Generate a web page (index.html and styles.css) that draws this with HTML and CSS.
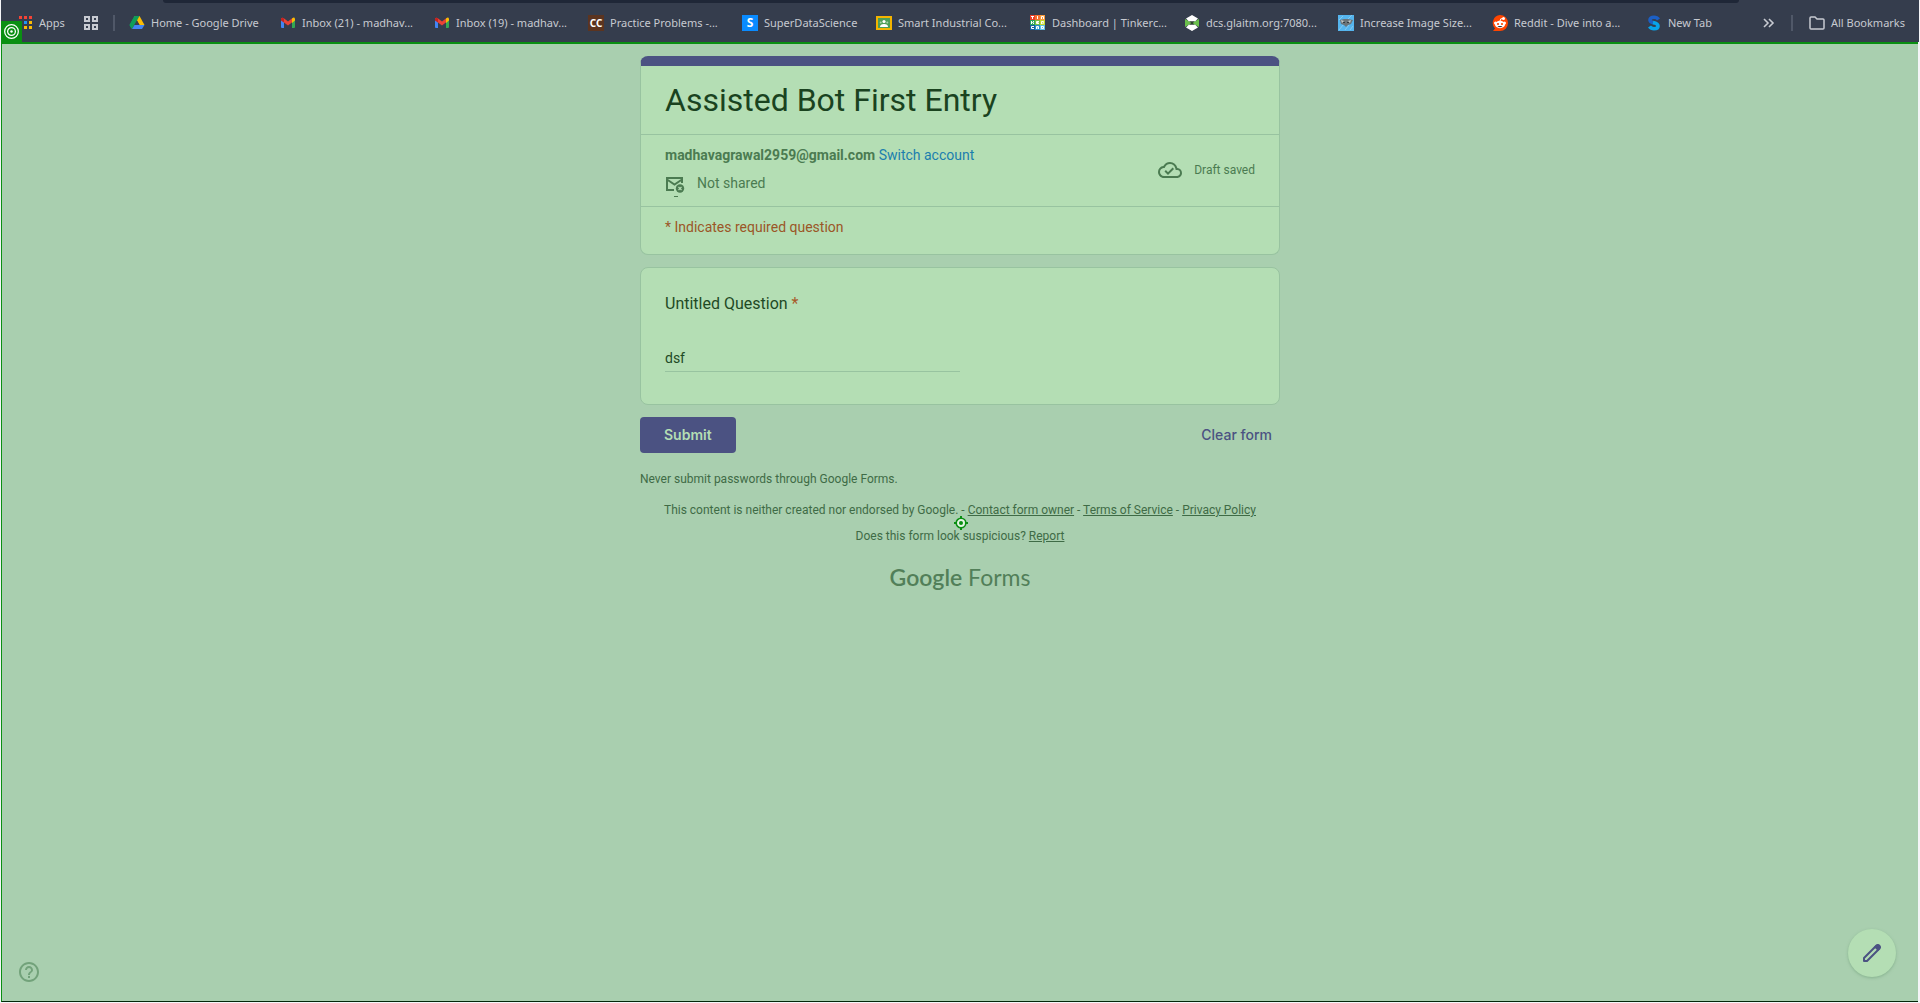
FILE: index.html
```html
<!DOCTYPE html>
<html lang="en">
<head>
<meta charset="utf-8">
<title>Assisted Bot First Entry</title>
<link rel="stylesheet" href="styles.css">
</head>
<body>
<header class="browser">
  <div class="omnibox"></div>
  <nav class="bookmarks" aria-label="Bookmarks">
    <a class="bookmark apps" href="#"><svg class="icon" viewBox="0 0 16 16"><g fill="#f44336"><path d="M2 1h3v3H2zM7 1h3v3H7zM12 1h3v3h-3z"/></g><path fill="#f44336" d="M2 6h3v3H2z"/><path fill="#2196f3" d="M7 6h3v3H7z"/><path fill="#fbbc04" d="M12 6h3v3h-3zM2 11h3v3H2zM7 11h3v3H7zM12 11h3v3h-3z"/></svg><span>Apps</span></a>
    <a class="bookmark groups" href="#" aria-label="Tab groups"><svg class="icon" viewBox="0 0 16 16" fill="none" stroke="#c7cad1" stroke-width="2"><path d="M2 2h4v4H2zM10 2h4v4h-4zM2 10h4v4H2zM10 10h4v4h-4z"/></svg></a>
    <span class="divider"></span>
    <a class="bookmark first" href="#"><svg class="icon" viewBox="0 0 16 16"><path fill="#0f9d58" d="M5.500 1h4L4 10.500 2.500 14 .5 10z"/><path fill="#fbbc04" d="M5.500 1h5l5 9h-5z"/><path fill="#0f9d58" d="M5.500 1h5L8 5.500 3 14 .5 10z"/><path fill="#4285f4" d="M5.500 10h10L13 14H3z"/><path fill="#353d4d" d="M8 5.500l2.500 4.500h-5z"/></svg><span>Home - Google Drive</span></a>
    <a class="bookmark wide" href="#"><svg class="icon" viewBox="0 0 16 16"><path fill="#4285f4" d="M1 4l3 2v7H2q-1 0-1-1z"/><path fill="#34a853" d="M12 6l3-2v8q0 1-1 1h-2z"/><path fill="#ea4335" d="M1 5V4q.5-2 2.500-1L8 6.500 12.500 3v4L8 10.500 4 7.500z"/><path fill="#fbbc04" d="M12 3.500q2.500-2 3 .5v1.500L12 8z"/><path fill="#c5221f" d="M1 4q1-2 3-.5V7.500L1 5.500z"/></svg><span>Inbox (21) - madhav...</span></a>
    <a class="bookmark wide" href="#"><svg class="icon" viewBox="0 0 16 16"><path fill="#4285f4" d="M1 4l3 2v7H2q-1 0-1-1z"/><path fill="#34a853" d="M12 6l3-2v8q0 1-1 1h-2z"/><path fill="#ea4335" d="M1 5V4q.5-2 2.500-1L8 6.500 12.500 3v4L8 10.500 4 7.500z"/><path fill="#fbbc04" d="M12 3.500q2.500-2 3 .5v1.500L12 8z"/><path fill="#c5221f" d="M1 4q1-2 3-.5V7.500L1 5.500z"/></svg><span>Inbox (19) - madhav...</span></a>
    <a class="bookmark wide" href="#"><span class="icon tile brown">CC</span><span>Practice Problems -...</span></a>
    <a class="bookmark short" href="#"><span class="icon tile blue">S</span><span>SuperDataScience</span></a>
    <a class="bookmark wide" href="#"><svg class="icon" viewBox="0 0 16 16"><path fill="#f4b400" d="M0 1h16v14H0z"/><path fill="#4c9f57" d="M2 3h12v10H2z"/><circle cx="8" cy="6.500" r="1.600" fill="#fff"/><circle cx="4.700" cy="7.500" r="1" fill="#a5d3a9"/><circle cx="11.300" cy="7.500" r="1" fill="#a5d3a9"/><path fill="#fff" d="M4 12q0-3 4-3t4 3z"/></svg><span>Smart Industrial Co...</span></a>
    <a class="bookmark wide" href="#"><svg class="icon" viewBox="0 0 16 16"><path fill="#e8402a" d="M0 0h5v5H0z"/><path fill="#f3702f" d="M5 0h5v5H5z"/><path fill="#f89a3c" d="M10 0h5v5h-5z"/><path fill="#28a55c" d="M0 5h5v5H0z"/><path fill="#77c043" d="M5 5h5v5H5z"/><path fill="#c3d82e" d="M10 5h5v5h-5z"/><path fill="#17619c" d="M0 10h5v5H0z"/><path fill="#2490c9" d="M5 10h5v5H5z"/><path fill="#5fc0e8" d="M10 10h5v5h-5z"/><path fill="none" stroke="#fff" d="M1 1.500h3M2.500 1v3M7.500 1v3M11.500 4V1.500h2V4M1.500 6v3M3.500 6v1l-1 .5 1 .5v1M9 6.500H6.500v2H9M6.500 7.500h2M11.500 9V6.500h2v1l-1 .5 1 1M4 11.500H1.500v2H4M6.500 14v-2.500h2V14M6.500 13h2M11.500 11v2.500h2v-2h-2"/></svg><span>Dashboard | Tinkerc...</span></a>
    <a class="bookmark wide" href="#"><svg class="icon" viewBox="0 0 16 16"><path fill="#6abf4b" d="M1 4l7 4-7 4zM15 4v8L8 8z"/><path fill="#fff" d="M8 0l6 3.500-3 3H5l-3-3zM8 16l-6-3.500 3-3h6l3 3z"/><path fill="#27401f" d="M5 6.500h6L8 8zM5 9.500L8 8l3 1.500z"/></svg><span>dcs.glaitm.org:7080...</span></a>
    <a class="bookmark wide" href="#"><svg class="icon" viewBox="0 0 16 16"><path fill="#55b5ee" d="M0 0h16v16H0z"/><path stroke="#87caee" d="M1 5l4-4M10 4l4-4M1 15l4-5M7 15l4-5M12 15l3-4"/><path fill="#6b7478" d="M2 5l4-1h4l5 1-2 4-3 1-2 2-2-2-3-1z"/><path fill="#c4c7c6" d="M3 5l3 1-2 2zM13 5l-3 1 2 2z"/><path fill="#333b40" d="M5 7h2v1H5zM9 7h2v1H9z"/></svg><span>Increase Image Size...</span></a>
    <a class="bookmark wide" href="#"><svg class="icon" viewBox="0 0 16 16"><path fill="#ff4500" d="M8 0a8 8 0 1 1 0 16H1l2-2.500A8 8 0 0 1 8 0z"/><circle cx="11.500" cy="3.500" r="1.500" fill="#fff"/><path fill="none" stroke="#fff" d="M8 6q0-3 3-2.500"/><circle cx="3.500" cy="8" r="1.500" fill="#fff"/><circle cx="12.500" cy="8" r="1.500" fill="#fff"/><ellipse cx="8" cy="9.500" rx="5" ry="3.700" fill="#fff"/><circle cx="6" cy="9" r="1.100" fill="#ff4500"/><circle cx="10" cy="9" r="1.100" fill="#ff4500"/><path fill="#22303a" d="M5.500 11h5Q8 13.500 5.500 11z"/></svg><span>Reddit - Dive into a...</span></a>
    <a class="bookmark" href="#"><svg class="icon" viewBox="0 0 16 16"><path fill="none" stroke="#1c5fc4" stroke-width="3.600" d="M12.500 4.500Q11 2.300 8 2.300 4 2.300 4 5q0 2 4 3"/><path fill="none" stroke="#08a4ea" stroke-width="3.600" d="M7 7.500q5 1 5 3.500 0 2.700-4 2.700-3 0-4.500-2.200"/></svg><span>New Tab</span></a>
    <span class="end">
      <button class="more" aria-label="More bookmarks"><svg viewBox="0 0 12 10" fill="none" stroke="#c7cad1" stroke-width="1.600"><path d="M1 1l4 4-4 4M6 1l4 4-4 4"/></svg></button>
      <span class="divider"></span>
      <a class="bookmark" href="#"><svg class="icon" viewBox="0 0 16 16" fill="none" stroke="#c7cad1" stroke-width="1.500"><path d="M1 3q0-1 1-1h4l2 2h6q1 0 1 1v8q0 1-1 1H2q-1 0-1-1z"/></svg><span>All Bookmarks</span></a>
    </span>
  </nav>
  <svg class="badge" viewBox="0 0 20 20" fill="none" stroke="#fff"><circle cx="10" cy="10" r="6.500" stroke-width="1.200"/><circle cx="10" cy="10" r="3.700" stroke-width="1.200"/><circle cx="10" cy="10" r="1.200" fill="#fff" stroke="none"/></svg>
</header>

<main class="page">
  <form class="form">
    <section class="card intro">
      <h1>Assisted Bot First Entry</h1>
      <div class="account">
        <div>
          <p><strong>madhavagrawal2959@gmail.com</strong> <a href="#">Switch account</a></p>
          <p class="shared"><svg viewBox="0 0 20 20"><path fill="none" stroke="#4b7b51" stroke-width="2" d="M9 17H2V5h15v5M2 6.500l7.500 5L17 6.500"/><circle cx="15" cy="15.500" r="4.200" fill="#4b7b51"/><path stroke="#b4deb4" stroke-width="1.200" d="M13.500 14l3 3M16.500 14l-3 3"/><path fill="#4b7b51" d="M9 23h4v1H9z"/></svg><span>Not shared</span></p>
        </div>
        <p class="draft"><svg viewBox="0 0 24 24" fill="#4b7b51"><path d="M19.350 10.040A7.490 7.490 0 0 0 12 4C9.110 4 6.600 5.640 5.350 8.040A5.994 5.994 0 0 0 0 14c0 3.310 2.690 6 6 6h13c2.760 0 5-2.240 5-5 0-2.640-2.050-4.780-4.650-4.960zM19 18H6c-2.210 0-4-1.790-4-4 0-2.050 1.530-3.760 3.560-3.970l1.070-.110.500-.950A5.469 5.469 0 0 1 12 6c2.620 0 4.880 1.860 5.390 4.430l.300 1.500 1.530.110A2.980 2.980 0 0 1 22 15c0 1.650-1.350 3-3 3zm-9-3.820l-2.090-2.090L6.500 13.500 10 17l6.010-6.010-1.410-1.410z"/></svg><span>Draft saved</span></p>
      </div>
      <p class="required">* Indicates required question</p>
    </section>
    <section class="card question">
      <label for="answer">Untitled Question <span class="star">*</span></label>
      <input id="answer" type="text" value="dsf" required>
    </section>
    <div class="actions">
      <button class="submit" type="submit">Submit</button>
      <button class="clear" type="reset">Clear form</button>
    </div>
  </form>
  <footer class="footer">
    <p class="warning">Never submit passwords through Google Forms.</p>
    <p class="legal">This content is neither created nor endorsed by Google. - <a href="#">Contact form owner</a> - <a href="#">Terms of Service</a> - <a href="#">Privacy Policy</a></p>
    <p class="report">Does this form look suspicious? <a href="#">Report</a></p>
    <a class="logo" href="#"><b>Google</b> Forms</a>
  </footer>
  <svg class="target" viewBox="0 0 14 14"><path stroke="#0a8f12" stroke-width="2" d="M7 0v14M0 7h14"/><circle cx="7" cy="7" r="4.800" fill="#e4f5e4" stroke="#0a8f12" stroke-width="1.600"/><circle cx="7" cy="7" r="2" fill="#0a8f12"/></svg>
  <button class="help" aria-label="Help"><svg viewBox="0 0 24 24" fill="#72a27a"><path d="M11 18h2v-2h-2v2zm1-16C6.480 2 2 6.480 2 12s4.480 10 10 10 10-4.480 10-10S17.520 2 12 2zm0 18c-4.410 0-8-3.590-8-8s3.590-8 8-8 8 3.590 8 8-3.590 8-8 8zm0-14c-2.210 0-4 1.790-4 4h2c0-1.100.900-2 2-2s2 .900 2 2c0 2-3 1.750-3 5h2c0-2.250 3-2.500 3-5 0-2.210-1.790-4-4-4z"/></svg></button>
  <button class="edit" aria-label="Edit this form"><svg viewBox="0 0 24 24"><path fill="none" stroke="#4b5282" stroke-width="2" stroke-linejoin="round" d="M4 20v-3L16.500 4.500q1.200-1 2.300 0l.7.7q1 1.200 0 2.300L7 20z"/><path fill="#4b5282" d="M14 6l2-2q2-1.500 4 0 1.500 2 0 4l-2 2z"/></svg></button>
</main>
</body>
</html>
```
FILE: styles.css
```css
* { box-sizing: border-box; }

body {
  margin: 0;
  min-height: 100vh;
  padding: 0 2px 1px 1px;
  display: flex;
  flex-direction: column;
  background: #f4f5f8;
  font-family: Roboto, "Liberation Sans", sans-serif;
  font-size: 14px;
  line-height: 20px;
  color: #4b7b51;
}

p, h1 { margin: 0; }
button { padding: 0; border: 0; background: none; font: inherit; color: inherit; cursor: pointer; }
svg { display: block; }

/* Browser chrome */
.browser {
  position: relative;
  height: 42px;
  margin-right: -1px;
  background: #353d4d;
}

.omnibox {
  height: 3px;
  margin: 0 180px 0 162px;
  border-radius: 0 0 8px 8px;
  background: #1f2737;
}

.bookmarks {
  display: flex;
  align-items: center;
  gap: 18px;
  height: 39px;
  padding: 0 14px 0 16px;
  font-family: "Noto Sans", sans-serif;
  font-size: 11px;
  line-height: 16px;
  white-space: nowrap;
}

.bookmark {
  display: flex;
  align-items: center;
  gap: 6px;
  flex: none;
  color: #c7cad1;
  text-decoration: none;
}

.icon { width: 16px; height: 16px; flex: none; }
.apps { width: 48px; }
.first { width: 133px; }
.wide { width: 136px; }
.short { width: 116px; }
.groups + .divider { margin: 0 -4px; }

.tile {
  color: #fff;
  font-size: 10px;
  font-weight: 700;
  text-align: center;
}
.brown { background: #5b3420; }
.blue { background: #0a8bff; font-size: 12px; }

.divider { width: 2px; height: 16px; background: #505868; }

.end {
  display: flex;
  align-items: center;
  gap: 16px;
  margin-left: auto;
}
.more svg { width: 12px; height: 10px; }

.badge {
  position: absolute;
  left: 0;
  bottom: 0;
  width: 21px;
  height: 21px;
  background: #0a8f12;
}

/* Form page */
.page {
  position: relative;
  flex: 1;
  padding: 12px 0 24px;
  border: solid #0a8f12;
  border-width: 2px 0 1px 1px;
  border-bottom-color: #04270a;
  background: #a9cfaf;
}

.form, .footer {
  width: 100%;
  max-width: 640px;
  margin: 0 auto;
}

.card {
  border: 1px solid #98c3a0;
  border-radius: 8px;
  background: #b4deb4;
}

.intro {
  overflow: hidden;
  margin-bottom: 12px;
  border-top: 10px solid #4b5282;
}

.intro h1 {
  padding: 14px 24px;
  font-size: 32px;
  font-weight: 400;
  line-height: 40px;
  color: #1a431f;
}

.account {
  display: flex;
  align-items: center;
  justify-content: space-between;
  padding: 10px 24px 13px;
  border: solid #98c3a0;
  border-width: 1px 0;
}
.account a { color: #1b7fae; text-decoration: none; }

.shared {
  display: flex;
  align-items: center;
  gap: 12px;
  margin-top: 8px;
}
.shared svg { width: 20px; height: 20px; overflow: visible; }

.draft {
  display: flex;
  align-items: center;
  gap: 12px;
  padding-top: 2px;
  font-size: 12px;
}
.draft svg { width: 24px; height: 24px; }

.required { padding: 10px 24px 17px; color: #9b5627; }

.question {
  display: flex;
  flex-direction: column;
  align-items: flex-start;
  gap: 28px;
  padding: 24px 24px 32px;
}
.question label { font-size: 16px; line-height: 24px; color: #1f4a25; }
.question .star { color: #a85a2a; }
.question input {
  width: 50%;
  height: 28px;
  padding: 0;
  border: 0;
  border-bottom: 1px solid #98c3a0;
  outline: 0;
  background: none;
  font: inherit;
  color: #1f4a25;
}

.actions {
  display: flex;
  justify-content: space-between;
  margin-top: 12px;
  font-family: Inter, sans-serif;
  font-weight: 500;
}
.submit {
  height: 36px;
  padding: 0 24px;
  border-radius: 4px;
  background: #4b5282;
  color: #b4deb4;
  font-weight: 600;
}
.clear { padding: 0 8px; color: #4b5282; }

.footer { font-size: 12px; line-height: 16px; text-align: center; color: #3f6b46; }
.footer a { color: inherit; }
.warning { padding-top: 18px; text-align: left; }
.legal { margin-top: 15px; }
.report { margin-top: 10px; }
.footer .logo {
  display: inline-block;
  margin-top: 17px;
  font-family: Lato, sans-serif;
  font-size: 23px;
  line-height: 32px;
  text-decoration: none;
  color: #527f59;
}
.logo b { font-weight: 600; }

/* Floating controls */
.target {
  position: absolute;
  top: 472px;
  left: 50%;
  width: 14px;
  height: 14px;
  margin-left: -6px;
}
.help { position: absolute; left: 15px; bottom: 17px; }
.help svg { width: 24px; height: 24px; }
.edit {
  position: absolute;
  right: 22px;
  bottom: 24px;
  display: grid;
  place-items: center;
  width: 48px;
  height: 48px;
  border-radius: 50%;
  background: #b4deb4;
  box-shadow: 0 1px 3px #6f9f7999;
}
.edit svg { width: 24px; height: 24px; }
```
